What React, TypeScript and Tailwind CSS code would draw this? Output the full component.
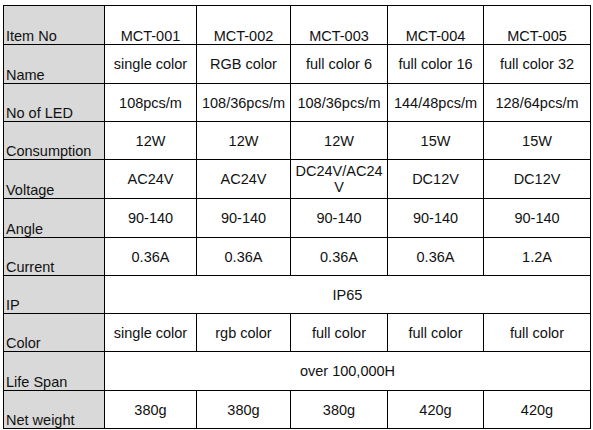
import React from 'react';

type Row = {
  label: string;
  values: string[];
  h: string;
  merged?: boolean;
  header?: boolean;
};

const rows: Row[] = [
  { label: 'Item No', values: ['MCT-001', 'MCT-002', 'MCT-003', 'MCT-004', 'MCT-005'], h: 'h-[38px]', header: true },
  { label: 'Name', values: ['single color', 'RGB color', 'full color 6', 'full color 16', 'full color 32'], h: 'h-[38px]' },
  { label: 'No of LED', values: ['108pcs/m', '108/36pcs/m', '108/36pcs/m', '144/48pcs/m', '128/64pcs/m'], h: 'h-[37px]' },
  { label: 'Consumption', values: ['12W', '12W', '12W', '15W', '15W'], h: 'h-[37px]' },
  { label: 'Voltage', values: ['AC24V', 'AC24V', 'DC24V/AC24V', 'DC12V', 'DC12V'], h: 'h-[38px]' },
  { label: 'Angle', values: ['90-140', '90-140', '90-140', '90-140', '90-140'], h: 'h-[38px]' },
  { label: 'Current', values: ['0.36A', '0.36A', '0.36A', '0.36A', '1.2A'], h: 'h-[37px]' },
  { label: 'IP', values: ['IP65'], h: 'h-[37px]', merged: true },
  { label: 'Color', values: ['single color', 'rgb color', 'full color', 'full color', 'full color'], h: 'h-[37px]' },
  { label: 'Life Span', values: ['over 100,000H'], h: 'h-[38px]', merged: true },
  { label: 'Net weight', values: ['380g', '380g', '380g', '420g', '420g'], h: 'h-[37px]' },
];

export default function App() {
  return (
    <div className="w-[593px] h-[430px] bg-white pl-[3px] pt-[5px] text-[14.5px] leading-[16px] text-[#111] font-['Liberation_Sans',Arial,sans-serif]">
      <div className="grid w-[588px] grid-cols-[100px_91px_93px_96px_95px_106px] gap-px border border-black bg-black">
        {rows.map((row) => (
          <React.Fragment key={row.label}>
            <div className={`${row.h} flex items-end bg-[#d9d9d9] pl-[2px]`}>{row.label}</div>
            {row.merged ? (
              <div className={`${row.h} col-span-5 flex items-center justify-center bg-white`}>
                {row.values[0]}
              </div>
            ) : (
              row.values.map((v, i) => (
                <div
                  key={i}
                  className={`${row.h} flex justify-center bg-white px-[3px] text-center ${
                    row.header ? 'items-end' : 'items-center'
                  } ${v.length > 10 && v.includes('/AC') ? 'break-all' : ''}`}
                >
                  {v}
                </div>
              ))
            )}
          </React.Fragment>
        ))}
      </div>
    </div>
  );
}
